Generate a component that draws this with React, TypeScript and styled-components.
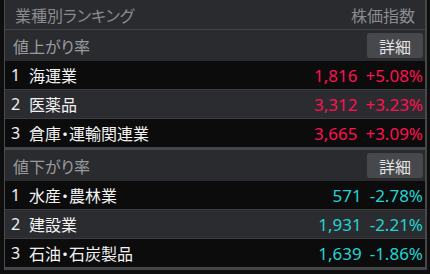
import React from 'react';
import styled, { createGlobalStyle } from 'styled-components';

type Item = { rank: number; name: string; price: string; change: string };

const gainers: Item[] = [
  { rank: 1, name: '海運業', price: '1,816', change: '+5.08%' },
  { rank: 2, name: '医薬品', price: '3,312', change: '+3.23%' },
  { rank: 3, name: '倉庫・運輸関連業', price: '3,665', change: '+3.09%' },
];

const losers: Item[] = [
  { rank: 1, name: '水産・農林業', price: '571', change: '-2.78%' },
  { rank: 2, name: '建設業', price: '1,931', change: '-2.21%' },
  { rank: 3, name: '石油・石炭製品', price: '1,639', change: '-1.86%' },
];

const GlobalStyle = createGlobalStyle`
  body {
    margin: 0;
    background: #0e0e0f;
    font-family: "Noto Sans", "Noto Sans CJK JP", sans-serif;
    font-feature-settings: "palt";
  }
`;

const Panel = styled.div`
  margin-left: 4px;
  width: 420px;
  border-left: 1px solid #4a4b4e;
  border-right: 2px solid #45464a;
  background: #2a2b2f;
`;

const Header = styled.div`
  height: 29px;
  display: flex;
  align-items: center;
  justify-content: space-between;
  padding: 0 10px;
  border-bottom: 1px solid #44454a;
  color: #8a8b8e;
  font-size: 16px;
`;

const Section = styled.div`
  border-bottom: 3px solid #45464a;
`;

const SectionHead = styled.div`
  height: 31px;
  display: flex;
  align-items: center;
  justify-content: space-between;
  padding: 0 2px 0 8px;
  color: #9a9b9e;
  font-size: 16px;
`;

const DetailButton = styled.button`
  width: 56px;
  height: 25px;
  border: none;
  border-radius: 3px;
  background: #47484c;
  color: #e2e2e4;
  font-family: inherit;
  font-size: 16px;
  padding: 0;
  cursor: pointer;
`;

const Row = styled.div<{ $alt: boolean }>`
  height: 28px;
  display: flex;
  align-items: center;
  padding: 0 2px 0 5px;
  background: ${(p) => (p.$alt ? '#2b2c30' : '#0c0c0d')};
  border-top: ${(p) => (p.$alt ? '1px solid #3c3d41' : 'none')};
  border-bottom: ${(p) => (p.$alt ? '1px solid #3c3d41' : 'none')};
  color: #f2f2f2;
  font-size: 16px;
`;

const Rank = styled.span`
  width: 18px;
  padding-left: 1px;
`;

const Name = styled.span`
  flex: 1;
`;

const Value = styled.span<{ $up: boolean }>`
  color: ${(p) => (p.$up ? '#ff1150' : '#22d4d4')};
  font-size: 17px;
  & + & {
    margin-left: 8px;
  }
`;

const RankingBlock = ({ title, items, up }: { title: string; items: Item[]; up: boolean }) => (
  <Section>
    <SectionHead>
      <span>{title}</span>
      <DetailButton>詳細</DetailButton>
    </SectionHead>
    {items.map((it, i) => (
      <Row key={it.rank} $alt={i === 1}>
        <Rank>{it.rank}</Rank>
        <Name>{it.name}</Name>
        <Value $up={up}>{it.price}</Value>
        <Value $up={up}>{it.change}</Value>
      </Row>
    ))}
  </Section>
);

export default function App() {
  return (
    <>
      <GlobalStyle />
      <Panel>
        <Header>
          <span>業種別ランキング</span>
          <span>株価指数</span>
        </Header>
        <RankingBlock title="値上がり率" items={gainers} up />
        <RankingBlock title="値下がり率" items={losers} up={false} />
      </Panel>
    </>
  );
}
